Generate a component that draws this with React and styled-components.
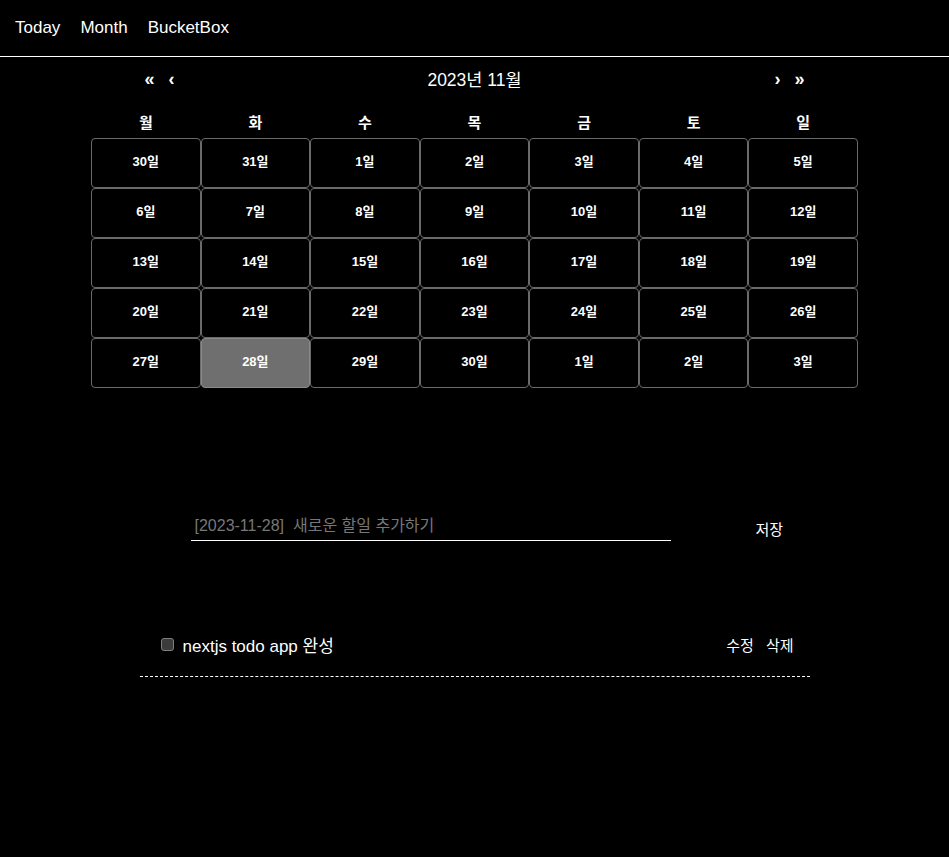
import React from 'react'
import styled, { createGlobalStyle } from 'styled-components'

const Global = createGlobalStyle`
  body {
    margin: 0;
    background: #000;
    color: #fff;
    font-family: 'Liberation Sans', 'Noto Sans CJK KR', sans-serif;
  }
`

const weekdays = ['월', '화', '수', '목', '금', '토', '일']
const days = [
  30, 31, 1, 2, 3, 4, 5,
  6, 7, 8, 9, 10, 11, 12,
  13, 14, 15, 16, 17, 18, 19,
  20, 21, 22, 23, 24, 25, 26,
  27, 28, 29, 30, 1, 2, 3,
]

export default () => (
  <Root>
    <Global />
    <Header>
      <NavLink>Today</NavLink>
      <NavLink>Month</NavLink>
      <NavLink>BucketBox</NavLink>
    </Header>
    <Calendar>
      <MonthNav>
        <Arrow>«</Arrow>
        <Arrow>‹</Arrow>
        <MonthLabel>2023년 11월</MonthLabel>
        <Arrow>›</Arrow>
        <Arrow>»</Arrow>
      </MonthNav>
      <Grid>
        {weekdays.map(w => <Weekday key={w}>{w}</Weekday>)}
        {days.map((d, i) => (
          <Day key={i} active={i === 29}>{d}일</Day>
        ))}
      </Grid>
    </Calendar>
    <Form>
      <Input placeholder="[2023-11-28]  새로운 할일 추가하기" />
      <SaveButton>저장</SaveButton>
    </Form>
    <TodoList>
      <TodoItem>
        <Check type="checkbox" />
        <TodoText>nextjs todo app 완성</TodoText>
        <Actions>
          <ActionButton>수정</ActionButton>
          <ActionButton>삭제</ActionButton>
        </Actions>
      </TodoItem>
    </TodoList>
  </Root>
)

const Root = styled.div`
  min-height: 857px;
`
const Header = styled.nav`
  display: flex;
  align-items: center;
  gap: 20px;
  height: 56px;
  padding: 0 15px;
  border-bottom: 1px solid #fff;
`
const NavLink = styled.a`
  font-size: 17px;
  color: #fff;
  cursor: pointer;
`
const Calendar = styled.div`
  width: 767px;
  margin: 0 auto;
`
const MonthNav = styled.div`
  display: flex;
  align-items: center;
  width: 672px;
  height: 44px;
  margin: 0 auto;
`
const Arrow = styled.button`
  width: 22px;
  background: none;
  border: none;
  color: #fff;
  font-size: 18px;
  font-weight: bold;
  padding: 0;
  font-family: inherit;
  cursor: pointer;
`
const MonthLabel = styled.div`
  flex: 1;
  text-align: center;
  font-size: 17.5px;
  padding-bottom: 2px;
`
const Grid = styled.div`
  display: grid;
  grid-template-columns: repeat(7, 1fr);
`
const Weekday = styled.div`
  text-align: center;
  font-size: 15px;
  font-weight: bold;
  height: 37px;
  line-height: 44px;
`
const Day = styled.div`
  height: 50px;
  display: flex;
  align-items: center;
  justify-content: center;
  box-sizing: border-box;
  padding-bottom: 5px;
  border: 1px solid ${p => (p.active ? '#8a8a8a' : '#6a6a6a')};
  border-radius: 4px;
  background: ${p => (p.active ? '#6f6f6f' : '#000')};
  font-size: 13px;
  font-weight: bold;
`
const Form = styled.div`
  display: flex;
  align-items: flex-end;
  width: 670px;
  box-sizing: border-box;
  margin: 125px auto 0;
  padding-left: 51px;
`
const Input = styled.input`
  width: 480px;
  box-sizing: border-box;
  background: none;
  border: none;
  border-bottom: 1px solid #fff;
  color: #fff;
  font-family: inherit;
  font-size: 16px;
  padding: 4px 4px 5px;
  outline: none;
  &::placeholder {
    color: #777;
  }
`
const SaveButton = styled.button`
  margin-left: 85px;
  margin-bottom: 2px;
  background: none;
  border: none;
  color: #fff;
  font-family: inherit;
  font-size: 15px;
  padding: 0;
  cursor: pointer;
`
const TodoList = styled.ul`
  list-style: none;
  width: 670px;
  margin: 91px auto 0;
  padding: 0;
`
const TodoItem = styled.li`
  display: flex;
  align-items: center;
  padding: 0 16px 19px 21px;
  border-bottom: 1px dashed #fff;
`
const Check = styled.input`
  appearance: none;
  width: 13px;
  height: 13px;
  margin: 0 9px 0 0;
  box-sizing: border-box;
  background: #3b3b3b;
  border: 1px solid #808080;
  border-radius: 3px;
`
const TodoText = styled.span`
  flex: 1;
  font-size: 17px;
`
const Actions = styled.div`
  display: flex;
  gap: 12px;
`
const ActionButton = styled.button`
  background: none;
  border: none;
  color: #fff;
  font-family: inherit;
  font-size: 15px;
  padding: 0;
  cursor: pointer;
`
